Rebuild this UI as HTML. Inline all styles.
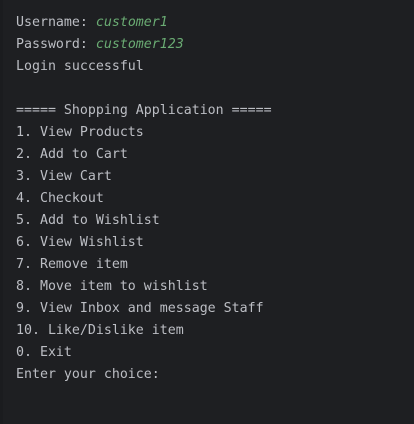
<!DOCTYPE html>
<html><head><style>
html,body{margin:0;padding:0;}
body{width:414px;height:424px;background:#1e1f22;overflow:hidden;position:relative;}
.strip{position:absolute;left:0;top:0;width:3px;height:424px;background:#1b1c1f;}
pre{margin:0;position:absolute;left:16px;top:12px;font-family:"DejaVu Sans Mono","Liberation Mono",monospace;font-size:13.28px;line-height:22px;color:#bcbec4;}
i{color:#6aab73;}
</style></head><body>
<div class="strip"></div>
<pre>Username: <i>customer1</i>
Password: <i>customer123</i>
Login successful

===== Shopping Application =====
1. View Products
2. Add to Cart
3. View Cart
4. Checkout
5. Add to Wishlist
6. View Wishlist
7. Remove item
8. Move item to wishlist
9. View Inbox and message Staff
10. Like/Dislike item
0. Exit
Enter your choice:</pre>
</body></html>
